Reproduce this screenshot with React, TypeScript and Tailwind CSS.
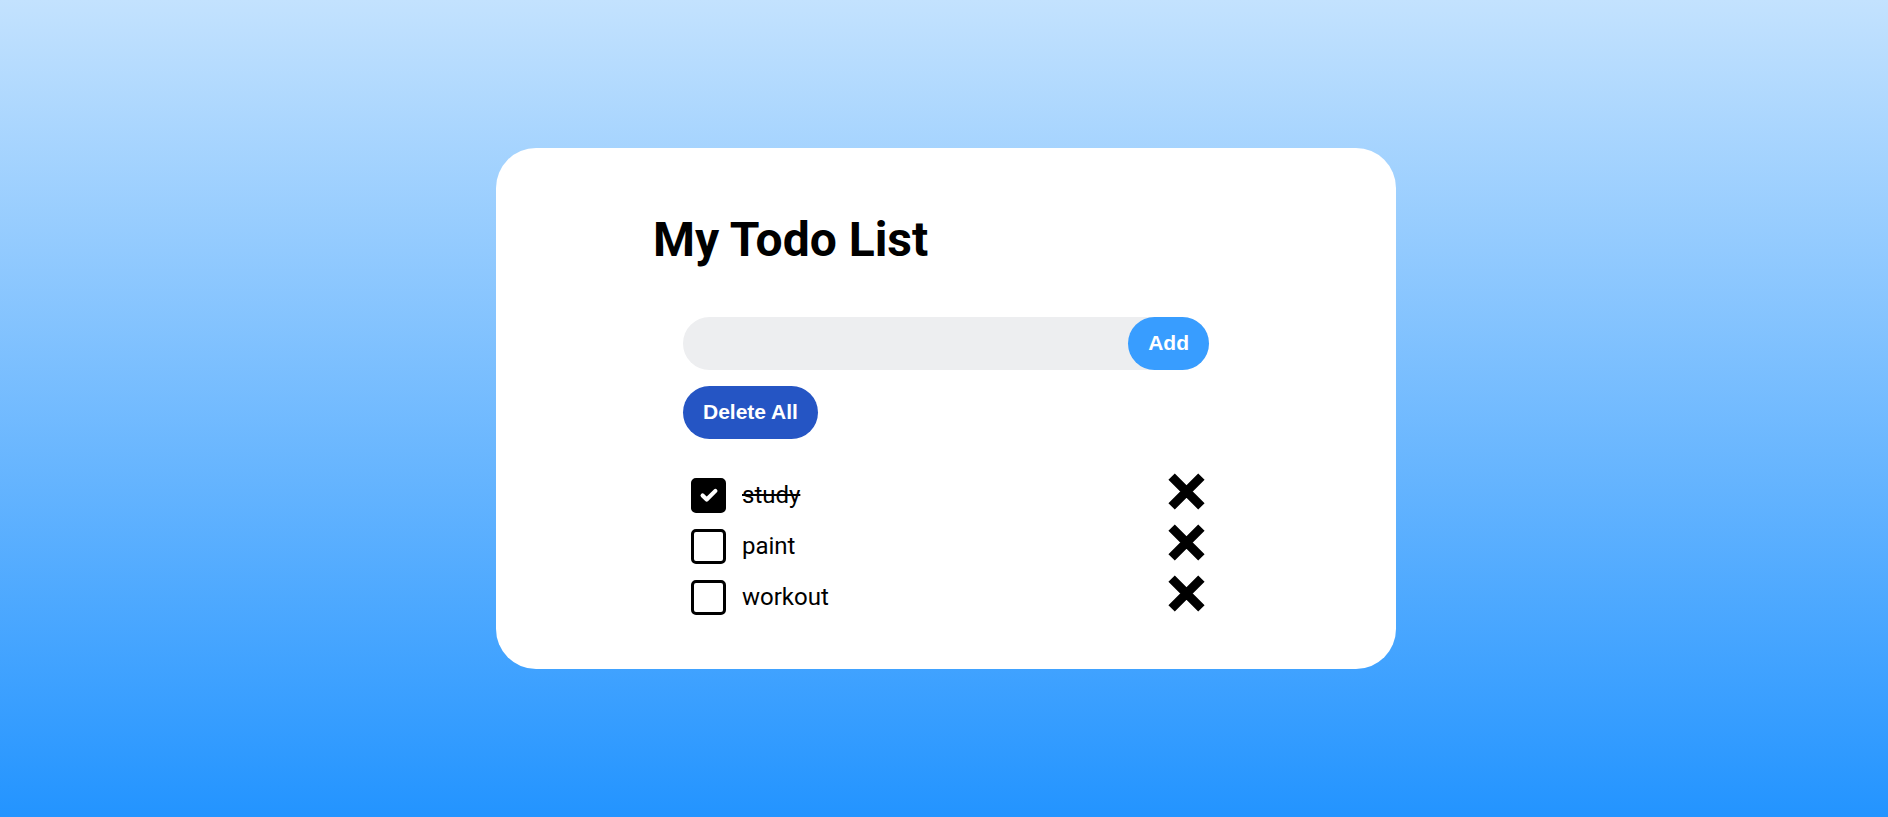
import { useState } from 'react'

type Todo = { id: number; text: string; done: boolean }

const initialTodos: Todo[] = [
  { id: 1, text: 'study', done: true },
  { id: 2, text: 'paint', done: false },
  { id: 3, text: 'workout', done: false },
]

const XMark = () => (
  <svg viewBox="0 0 37 37" className="w-[37px] h-[37px]" fill="none" stroke="currentColor" strokeWidth="9">
    <path d="M3.6 3.6L33.4 33.4M33.4 3.6L3.6 33.4" />
  </svg>
)

const Checkbox = ({ checked, onToggle }: { checked: boolean; onToggle: () => void }) => (
  <button
    onClick={onToggle}
    className={`w-[35px] h-[35px] rounded-[5px] border-[3px] border-black flex items-center justify-center shrink-0 ${
      checked ? 'bg-black' : 'bg-white'
    }`}
  >
    {checked && (
      <svg viewBox="0 0 24 24" className="w-[22px] h-[22px]" fill="none" stroke="white" strokeWidth="4.5" strokeLinecap="round" strokeLinejoin="round">
        <path d="M5 12.5l4.5 4.5L19 7.5" />
      </svg>
    )}
  </button>
)

export default function App() {
  const [todos, setTodos] = useState<Todo[]>(initialTodos)
  const [text, setText] = useState('')

  const addTodo = () => {
    if (!text.trim()) return
    setTodos([...todos, { id: Date.now(), text: text.trim(), done: false }])
    setText('')
  }

  return (
    <div className="min-h-screen flex items-center justify-center bg-[linear-gradient(to_bottom,#c3e2fe,#2394ff)]">
      <div className="w-[900px] bg-white rounded-[40px] flex flex-col items-center pt-[64px] pb-[46px] -mt-[1px] ml-[4px]">
        <div className="w-[582px]">
          <h1 className="-ml-[2px] text-[48px] leading-[56px] font-bold text-black font-['Roboto',sans-serif]">My Todo List</h1>

          <div className="px-[28px] mt-[49px]">
            {/* input row */}
            <div className="flex h-[53px] bg-[#edeef0] rounded-full">
              <input
                value={text}
                onChange={(e) => setText(e.target.value)}
                className="flex-1 bg-transparent outline-none px-6 text-[20px] font-['Roboto',sans-serif]"
              />
              <button
                onClick={addTodo}
                className="h-[53px] px-[20px] rounded-full bg-[#389dff] text-white text-[21px] font-bold font-['Liberation_Sans',Arial,sans-serif]"
              >
                Add
              </button>
            </div>

            <button
              onClick={() => setTodos([])}
              className="mt-[16px] h-[53px] px-[20px] rounded-full bg-[#2555c4] text-white text-[21px] font-bold font-['Liberation_Sans',Arial,sans-serif]"
            >
              Delete All
            </button>

            <ul className="mt-[31px] pl-[8px] pr-[4px]">
              {todos.map((todo) => (
                <li key={todo.id} className="h-[51px] flex items-center">
                  <Checkbox
                    checked={todo.done}
                    onToggle={() =>
                      setTodos(todos.map((t) => (t.id === todo.id ? { ...t, done: !t.done } : t)))
                    }
                  />
                  <span
                    className={`ml-[16px] flex-1 text-[24px] text-black font-['Roboto',sans-serif] ${
                      todo.done ? 'line-through' : ''
                    }`}
                  >
                    {todo.text}
                  </span>
                  <button
                    onClick={() => setTodos(todos.filter((t) => t.id !== todo.id))}
                    className="mb-[8px] text-black"
                  >
                    <XMark />
                  </button>
                </li>
              ))}
            </ul>
          </div>
        </div>
      </div>
    </div>
  )
}
